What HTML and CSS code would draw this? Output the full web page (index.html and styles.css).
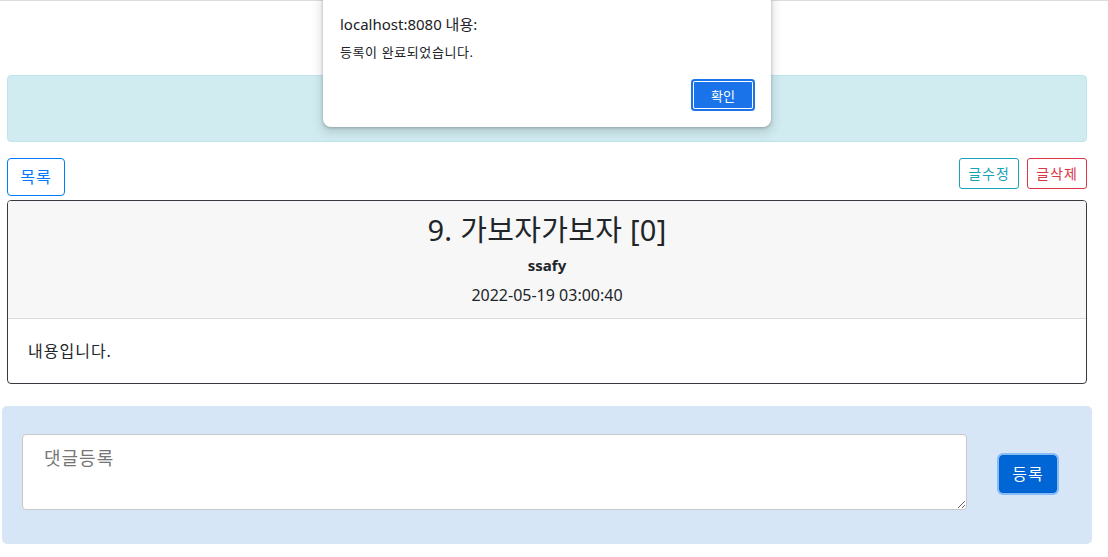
FILE: index.html
```html
<!DOCTYPE html>
<html lang="ko">
<head>
<meta charset="utf-8">
<title>게시글</title>
<link rel="stylesheet" href="styles.css">
</head>
<body>
<div class="topline"></div>
<main class="page">
  <div class="notice"></div>
  <div class="actions">
    <a class="btn btn-outline-primary btn-list" href="#">목록</a>
    <div class="actions-right">
      <a class="btn btn-sm btn-outline-info" href="#">글수정</a>
      <a class="btn btn-sm btn-outline-danger" href="#">글삭제</a>
    </div>
  </div>
  <article class="card">
    <header class="card-header">
      <h3 class="card-title">9. 가보자가보자 [0]</h3>
      <div class="card-author">ssafy</div>
      <div class="card-date">2022-05-19 03:00:40</div>
    </header>
    <div class="card-body">내용입니다.</div>
  </article>
</main>
<section class="comment">
  <textarea class="comment-input" placeholder="댓글등록"></textarea>
  <button class="btn btn-primary btn-focus" type="button">등록</button>
</section>
<div class="dialog">
  <div class="dialog-title">localhost:8080 내용:</div>
  <div class="dialog-msg">등록이 완료되었습니다.</div>
  <div class="dialog-foot"><button class="dialog-ok" type="button">확인</button></div>
</div>
</body>
</html>
```

FILE: styles.css
```css
* { box-sizing: border-box; }
html, body { margin: 0; padding: 0; background: #fff; }
body {
  font-family: "Noto Sans", "Noto Sans CJK KR", sans-serif;
  font-size: 16px;
  line-height: 1.5;
  color: #212529;
}
.topline { height: 1px; background: #dadce0; }
.page { padding: 0 21px 0 7px; }
.notice {
  margin-top: 74px;
  height: 67px;
  background: #d1ecf1;
  border: 1px solid #bee5eb;
  border-radius: 4px;
}
.actions {
  margin-top: 16px;
  display: flex;
  justify-content: space-between;
  align-items: flex-start;
}
.actions-right { display: flex; gap: 8px; }
.btn {
  display: inline-block;
  font-family: inherit;
  font-size: 16px;
  line-height: 24px;
  padding: 6px 0;
  border: 1px solid transparent;
  border-radius: 4px;
  text-decoration: none;
  text-align: center;
  background: transparent;
  cursor: pointer;
  width: 58px;
  letter-spacing: 1px;
}
.btn-sm { font-size: 14px; line-height: 21px; padding: 4px 0; border-radius: 3px; width: 60px; }
.btn-outline-primary { color: #007bff; border-color: #007bff; }
.btn-outline-info { color: #17a2b8; border-color: #17a2b8; }
.btn-outline-danger { color: #dc3545; border-color: #dc3545; }
.card {
  margin-top: 4px;
  border: 1px solid #343a40;
  border-radius: 4px;
  overflow: hidden;
}
.card-header {
  background: #f7f7f7;
  border-bottom: 1px solid #dcdcdc;
  text-align: center;
  padding: 12px 20px 11px;
}
.card-title {
  margin: 0;
  font-size: 29px;
  font-weight: 400;
  line-height: 34px;
  letter-spacing: 0.3px;
}
.card-author { margin-top: 6px; font-weight: 700; line-height: 24px; font-size: 15px; }
.card-date { margin-top: 6px; line-height: 24px; }
.card-body { padding: 20px; line-height: 24px; letter-spacing: 1px; }
.comment {
  margin: 22px 16px 0 2px;
  height: 138px;
  background: #d6e6f7;
  border-radius: 5px;
  padding: 28px 35px 34px 20px;
  display: flex;
  align-items: center;
  gap: 32px;
}
.comment-input {
  flex: 1;
  height: 76px;
  align-self: flex-start;
  border: 1px solid #c8c8c8;
  border-radius: 4px;
  padding: 10px 21px;
  font-family: inherit;
  font-size: 18px;
  line-height: 27px;
  color: #333;
  background: #fff;
  letter-spacing: 1px;
}
.comment-input::placeholder { color: #767676; }
.btn-primary {
  color: #fff;
  background: #0066d6;
  border-color: #0062cc;
  margin-top: 4px;
}
.btn-focus { box-shadow: 0 0 0 2px #86bcf7; }
.dialog {
  position: absolute;
  left: 323px;
  top: -8px;
  width: 448px;
  height: 135px;
  background: #fff;
  border-radius: 8px;
  box-shadow: 0 1px 3px rgba(60,64,67,.35), 0 4px 8px 3px rgba(60,64,67,.15);
  padding: 20px 16px 0 17px;
  color: #202124;
}
.dialog-title { font-size: 15px; line-height: 24px; }
.dialog-msg { font-size: 13px; line-height: 20px; margin-top: 6px; letter-spacing: 0.6px; }
.dialog-foot { display: flex; justify-content: flex-end; margin-top: 17px; }
.dialog-ok {
  width: 64px;
  height: 32px;
  border: none;
  border-radius: 4px;
  background: #1a73e8;
  color: #fff;
  font-family: inherit;
  font-size: 13px;
  box-shadow: inset 0 0 0 2px #1a73e8, inset 0 0 0 3px #fff;
}
```
